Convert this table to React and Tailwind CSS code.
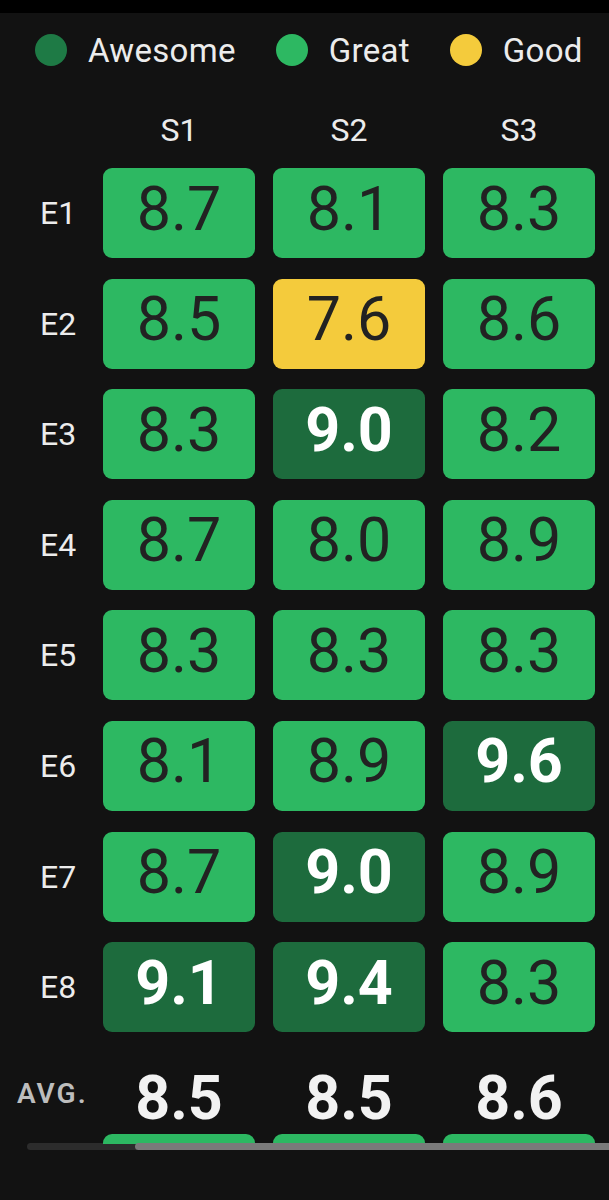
import React from 'react';

const AWESOME = 'awesome';
const GREAT = 'great';
const GOOD = 'good';

// rating -> bucket
const bucket = (v) => {
    if (v >= 9) return AWESOME;
    if (v >= 8) return GREAT;
    return GOOD;
};

const rows = [
    { label: 'E1', scores: [8.7, 8.1, 8.3] },
    { label: 'E2', scores: [8.5, 7.6, 8.6] },
    { label: 'E3', scores: [8.3, 9.0, 8.2] },
    { label: 'E4', scores: [8.7, 8.0, 8.9] },
    { label: 'E5', scores: [8.3, 8.3, 8.3] },
    { label: 'E6', scores: [8.1, 8.9, 9.6] },
    { label: 'E7', scores: [8.7, 9.0, 8.9] },
    { label: 'E8', scores: [9.1, 9.4, 8.3] },
];

const averages = ['8.5', '8.5', '8.6'];

const cellStyles = {
    [AWESOME]: 'bg-[#1d6b3d] text-white font-bold',
    [GREAT]: 'bg-[#2db862] text-[#222222] font-normal',
    [GOOD]: 'bg-[#f4cb3c] text-[#222222] font-normal',
};

const LegendItem = ({ dot, label }) => (
    <div className="flex items-center gap-[21px]">
        <span className={`w-[32px] h-[32px] rounded-full ${dot}`} />
        <span className="text-[33px] leading-none text-[#ececec] tracking-[0.3px]">{label}</span>
    </div>
);

const ScoreCell = ({ value }) => (
    <div
        className={`h-[90px] rounded-[9px] flex items-center justify-center text-[61px] leading-none pb-[8px] ${cellStyles[bucket(value)]}`}
    >
        {value.toFixed(1)}
    </div>
);

export default function App() {
    return (
        <div className="w-[609px] h-[1200px] bg-[#121212] overflow-hidden" style={{ fontFamily: 'Roboto, "Noto Sans", sans-serif' }}>
            <div className="h-[13px] bg-black" />

            <div className="h-[74px] flex items-center pl-[35px] gap-[40px]">
                <LegendItem dot="bg-[#1e7a45]" label="Awesome" />
                <LegendItem dot="bg-[#2db862]" label="Great" />
                <LegendItem dot="bg-[#f4cb3c]" label="Good" />
            </div>

            <div className="mt-[21px] h-[44px] grid grid-cols-[85px_152px_152px_152px] gap-x-[18px] items-center">
                <div />
                {['S1', 'S2', 'S3'].map((s) => (
                    <div key={s} className="text-center text-[32px] leading-none text-[#ececec]">{s}</div>
                ))}
            </div>

            <div className="mt-[16px] grid grid-cols-[85px_152px_152px_152px] gap-x-[18px] gap-y-[20.6px]">
                {rows.map((row) => (
                    <React.Fragment key={row.label}>
                        <div className="flex items-center pl-[40px] text-[32px] leading-none text-[#ececec]">{row.label}</div>
                        {row.scores.map((v, i) => (
                            <ScoreCell key={i} value={v} />
                        ))}
                    </React.Fragment>
                ))}
            </div>

            <div className="mt-[30px] h-[72px] grid grid-cols-[85px_152px_152px_152px] gap-x-[18px] items-center">
                <div className="pl-[17px] text-[28px] leading-none font-semibold text-[#bdbdbd] tracking-[2px] pb-[8px]">AVG.</div>
                {averages.map((a, i) => (
                    <div key={i} className="text-center text-[61px] leading-none font-bold text-[#f2f2f2]">{a}</div>
                ))}
            </div>

            {/* peek of the next row, cut by the horizontal scrollbar */}
            <div className="h-[10px] overflow-hidden grid grid-cols-[85px_152px_152px_152px] gap-x-[18px]">
                <div />
                <div className="h-[40px] rounded-[9px] bg-[#2db862]" />
                <div className="h-[40px] rounded-[9px] bg-[#2db862]" />
                <div className="h-[40px] rounded-[9px] bg-[#2db862]" />
            </div>
            <div className="ml-[27px] h-[7px] flex rounded-full bg-[#2c2c2c] -mt-[1px]">
                <div className="ml-[108px] flex-1 rounded-l-full bg-[#7a7a7a]" />
            </div>
        </div>
    );
}
